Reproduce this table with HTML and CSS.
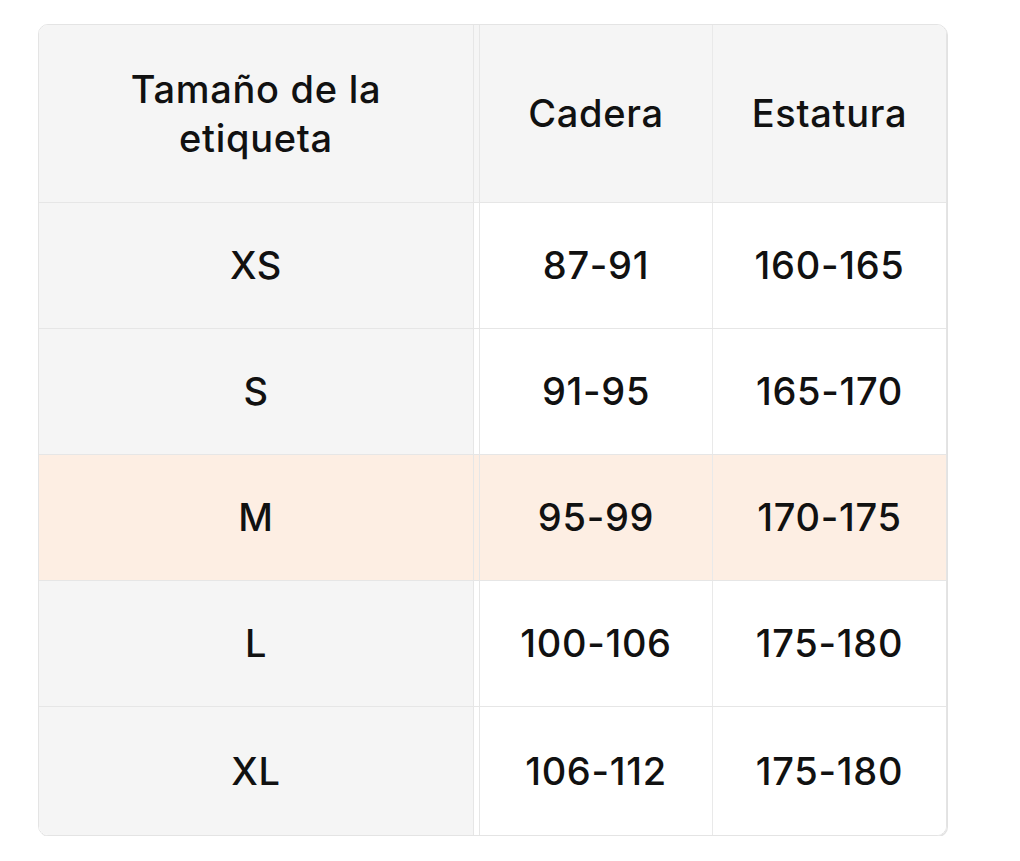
FILE: index.html
```html
<!DOCTYPE html>
<html lang="es">
<head>
<meta charset="utf-8">
<title>Tabla de tallas</title>
<link rel="stylesheet" href="styles.css">
</head>
<body>
<div class="table">
  <div class="row head">
    <div class="cell first">Tamaño de la<br>etiqueta</div>
    <div class="cell second">Cadera</div>
    <div class="cell third">Estatura</div>
  </div>
  <div class="row">
    <div class="cell first">XS</div>
    <div class="cell second">87-91</div>
    <div class="cell third">160-165</div>
  </div>
  <div class="row">
    <div class="cell first">S</div>
    <div class="cell second">91-95</div>
    <div class="cell third">165-170</div>
  </div>
  <div class="row hl">
    <div class="cell first">M</div>
    <div class="cell second">95-99</div>
    <div class="cell third">170-175</div>
  </div>
  <div class="row">
    <div class="cell first">L</div>
    <div class="cell second">100-106</div>
    <div class="cell third">175-180</div>
  </div>
  <div class="row last">
    <div class="cell first">XL</div>
    <div class="cell second">106-112</div>
    <div class="cell third">175-180</div>
  </div>
</div>
</body>
</html>
```
FILE: styles.css
```css
* { box-sizing: border-box; }
html, body { margin: 0; padding: 0; background: #fff; }
body {
  padding: 24px 0 0 38px;
  font-family: Inter, "Liberation Sans", sans-serif;
  color: #111;
}
.table {
  width: 909px;
  border: 1px solid #e4e4e4;
  border-radius: 10px;
  box-shadow: 1px 1px 0 #e2e2e2;
  overflow: hidden;
  display: flex;
  flex-direction: column;
}
.row {
  display: grid;
  grid-template-columns: 435px 239px 1fr;
  height: 126px;
  border-bottom: 1px solid #e6e6e6;
  background: #fff;
}
.row.head { height: 178px; background: #f5f5f5; }
.row.last { height: 128px; border-bottom: none; }
.row.hl { background: #fdeee3; }
.cell {
  display: flex;
  align-items: center;
  justify-content: center;
  text-align: center;
  font-size: 38px;
  font-weight: 500;
  line-height: 49px;
  letter-spacing: 0.7px;
}
.first {
  background: #f5f5f5;
  border-right: 1px solid #e6e6e6;
}
.row.hl .first { background: #fdeee3; }
.second {
  margin-left: 5px;
  border-left: 1px solid #e6e6e6;
  border-right: 1px solid #e9e9e9;
}
```
